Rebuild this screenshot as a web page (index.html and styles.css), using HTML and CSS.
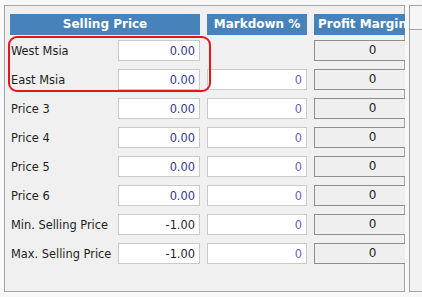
FILE: index.html
```html
<!DOCTYPE html>
<html lang="en">
<head>
    <title>Selling Price</title>
    <meta charset="utf-8">
    <link rel="stylesheet" href="styles.css">
</head>
<body>
    <main class="panel">
        <div class="heads">
            <div class="head head-price">Selling Price</div>
            <div class="head head-mark">Markdown %</div>
            <div class="head head-profit">Profit Margin</div>
        </div>
        <div class="rows">
            <label class="lbl">West Msia</label>
            <input class="price" type="text" value="0.00" readonly>
            <span></span>
            <div class="profit">0</div>

            <label class="lbl">East Msia</label>
            <input class="price" type="text" value="0.00" readonly>
            <input class="mark" type="text" value="0" readonly>
            <div class="profit">0</div>

            <label class="lbl">Price 3</label>
            <input class="price" type="text" value="0.00" readonly>
            <input class="mark" type="text" value="0" readonly>
            <div class="profit">0</div>

            <label class="lbl">Price 4</label>
            <input class="price" type="text" value="0.00" readonly>
            <input class="mark" type="text" value="0" readonly>
            <div class="profit">0</div>

            <label class="lbl">Price 5</label>
            <input class="price" type="text" value="0.00" readonly>
            <input class="mark" type="text" value="0" readonly>
            <div class="profit">0</div>

            <label class="lbl">Price 6</label>
            <input class="price" type="text" value="0.00" readonly>
            <input class="mark" type="text" value="0" readonly>
            <div class="profit">0</div>

            <label class="lbl">Min. Selling Price</label>
            <input class="price limit" type="text" value="-1.00" readonly>
            <input class="mark" type="text" value="0" readonly>
            <div class="profit">0</div>

            <label class="lbl">Max. Selling Price</label>
            <input class="price limit" type="text" value="-1.00" readonly>
            <input class="mark" type="text" value="0" readonly>
            <div class="profit">0</div>
        </div>
    </main>
    <aside class="side">
        <div class="side-head"></div>
    </aside>
    <div class="mark-box"></div>
</body>
</html>
```

FILE: styles.css
```css
html {
    font-family: "DejaVu Sans", Verdana, sans-serif;
    font-size: 11.4px;
}
body {
    margin: 0;
    height: 297px;
    display: flex;
    align-items: flex-start;
    background: #f8f8f8;
    color: #1e1e1e;
    overflow: hidden;
}
.panel {
    box-sizing: border-box;
    flex: none;
    width: 401px;
    height: 287px;
    margin: 5px 0 0 4px;
    padding: 8px 0 0 5px;
    border: 1px solid #a3a3a3;
    border-right: 0;
    background: linear-gradient(#a3a3a3, #a3a3a3) right top / 1px 100% no-repeat, #f0f0f0;
    overflow: hidden;
}
.heads {
    display: flex;
    gap: 7px;
}
.head {
    flex: none;
    height: 21px;
    line-height: 21px;
    background: #4782bb;
    color: #fff;
    font-weight: bold;
    font-size: 12px;
    text-align: center;
    white-space: nowrap;
}
.head-price {
    width: 190px;
}
.head-mark {
    width: 100px;
}
.head-profit {
    width: 96px;
    padding-left: 4px;
    text-align: left;
}
.rows {
    display: grid;
    grid-template-columns: 101px 82px 100px 116px;
    grid-auto-rows: 21px;
    column-gap: 7px;
    row-gap: 8px;
    margin-top: 5px;
}
.lbl {
    display: flex;
    align-items: center;
    padding-left: 1px;
    white-space: nowrap;
}
input {
    box-sizing: border-box;
    width: 100%;
    height: 21px;
    margin: 0;
    padding: 0 4px 0 0;
    border: 1px solid #cacaca;
    background: #fff;
    font: inherit;
    text-align: right;
    outline: none;
}
.price {
    color: #35358a;
}
.price.limit {
    color: #1e1e1e;
}
.mark {
    color: #6a5db8;
}
.profit {
    box-sizing: border-box;
    height: 21px;
    line-height: 19px;
    border: 1px solid #8e8e8e;
    border-right: 0;
    background: #efefef;
    text-align: center;
    font-size: 12px;
}
.side {
    box-sizing: border-box;
    flex: none;
    width: 30px;
    height: 287px;
    margin: 5px 0 0 4px;
    border: 1px solid #a3a3a3;
    border-right: 0;
    background: #f2f2f2;
}
.side-head {
    height: 23px;
    border-bottom: 1px solid #a3a3a3;
    background: #f6f6f6;
}
.mark-box {
    position: absolute;
    left: 8px;
    top: 36px;
    width: 203px;
    height: 56px;
    box-sizing: border-box;
    border: 2px solid #e8131c;
    border-radius: 9px;
}
```
